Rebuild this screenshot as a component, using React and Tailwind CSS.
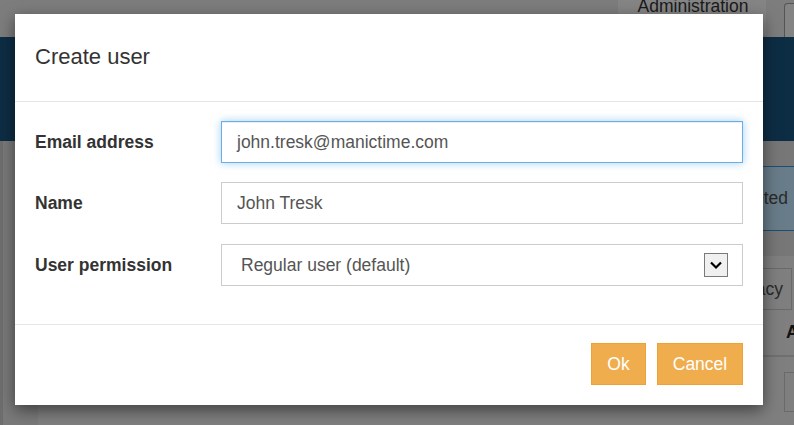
import React from "react";

export default function App() {
  return (
    <div className="relative w-[794px] h-[425px] overflow-hidden bg-[#7f7f7f] font-['Liberation_Sans',Arial,sans-serif]">
      {/* background page (under the modal overlay) */}
      <div className="flex flex-col h-full">
        <div className="h-[37px] bg-[#7d7d7d] flex justify-end shrink-0">
          <div className="w-[148px] h-[37px] bg-[#858585] text-[17.5px] leading-[17px] text-[#1a1a1a] text-center -mt-[2px] pl-[2px]">
            Administration
          </div>
          <div className="w-[18px]" />
          <div className="w-[10px] mt-[3px] border-l border-t border-[#555] rounded-tl-[4px] bg-[#848484]" />
        </div>
        <div className="h-[104px] bg-[#0d2d44] shrink-0" />
        <div className="flex flex-1">
          <div className="w-[38px] bg-[#7a7a7a] border-l-[3px] border-[#6e6e6e]" />
          <div className="flex-1 flex flex-col">
            <div className="h-[115px] bg-[#777777] pt-[25px] flex flex-col">
              <div className="h-[65px] ml-auto w-[200px] bg-[#687c89] border-y border-[#1d4f74] flex items-center justify-end pr-[6px] text-[17.5px] text-[#2a2a2a]">
                Deleted
              </div>
            </div>
            <div className="flex-1 bg-[#7f7f7f] flex flex-col items-end pt-[12px]">
              <div className="w-[100px] h-[42px] border border-[#6a6a6a] mr-[2px] flex items-center justify-end pr-[8px] text-[17.5px] text-[#2a2a2a]">
                Privacy
              </div>
              <div className="w-[100px] h-[47px] border-b-2 border-[#707070] flex items-center justify-end text-[17.5px] font-bold text-[#111] pr-0 -mr-[6px]">
                <span className="w-[14px] overflow-hidden">A</span>
              </div>
              <div className="w-[10px] h-[40px] mt-[15px] border-l border-t border-b border-[#6a6a6a]" />
            </div>
          </div>
        </div>
      </div>

      {/* modal */}
      <div className="absolute left-[15px] top-[14px] w-[748px] h-[391px] bg-white flex flex-col shadow-[0_5px_15px_rgba(0,0,0,0.5)]">
        <div className="h-[88px] shrink-0 border-b border-[#e5e5e5] flex items-center px-[20px]">
          <h4 className="text-[22px] text-[#333] leading-none mt-[-2px]">Create user</h4>
        </div>
        <div className="px-[20px] pt-[19px] pb-[38px] flex flex-col">
          <div className="flex items-center h-[42px]">
            <label className="w-[186px] text-[17.5px] font-bold text-[#333]">Email address</label>
            <div className="flex-1 h-[42px] border border-[#66afe9] shadow-[inset_0_1px_1px_rgba(0,0,0,0.075),0_0_8px_rgba(102,175,233,0.6)] flex items-center pl-[15px] text-[17.5px] text-[#555]">
              john.tresk@manictime.com
            </div>
          </div>
          <div className="flex items-center h-[42px] mt-[19px]">
            <label className="w-[186px] text-[17.5px] font-bold text-[#333]">Name</label>
            <div className="flex-1 h-[42px] border border-[#cccccc] flex items-center pl-[15px] text-[17.5px] text-[#555]">
              John Tresk
            </div>
          </div>
          <div className="flex items-center h-[42px] mt-[20px]">
            <label className="w-[186px] text-[17.5px] font-bold text-[#333]">User permission</label>
            <div className="flex-1 h-[42px] border border-[#cccccc] flex items-center pl-[19px] pr-[14px] text-[17.5px] text-[#555]">
              <span className="flex-1">Regular user (default)</span>
              <div className="w-[24px] h-[24px] border border-[#7a7a7a] bg-[#f0f0f0] flex items-center justify-center">
                <svg width="14" height="10" viewBox="0 0 14 10">
                  <path d="M2 2.5 L7 7.5 L12 2.5" fill="none" stroke="#000" strokeWidth="2.2" />
                </svg>
              </div>
            </div>
          </div>
        </div>
        <div className="border-t border-[#e5e5e5] pt-[18px] pr-[20px] flex justify-end gap-[11px]">
          <button className="w-[55px] h-[42px] bg-[#f0ad4e] border border-[#eea236] text-white text-[17.5px] flex items-center justify-center">
            Ok
          </button>
          <button className="w-[86px] h-[42px] bg-[#f0ad4e] border border-[#eea236] text-white text-[17.5px] flex items-center justify-center">
            Cancel
          </button>
        </div>
      </div>
    </div>
  );
}
